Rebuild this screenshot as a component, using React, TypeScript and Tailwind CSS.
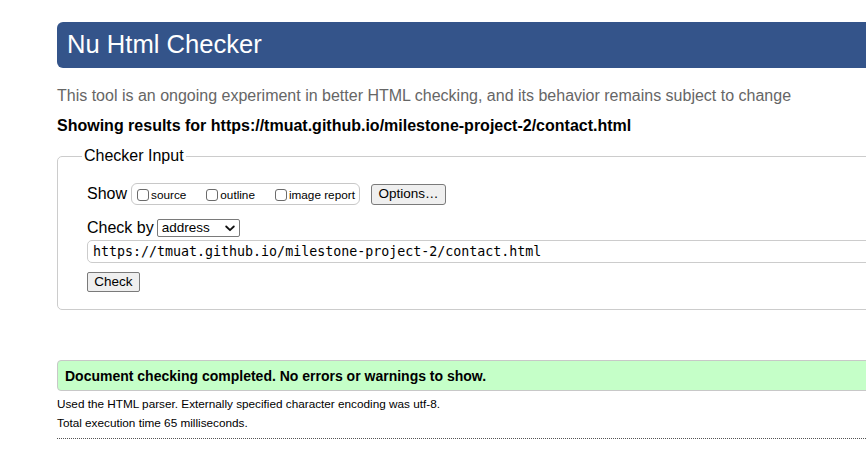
export default function App() {
  const options = [
    { label: "source", gap: "mr-[20px]" },
    { label: "outline", gap: "mr-[20px]" },
    { label: "image report", gap: "" },
  ];

  return (
    <div className="w-[866px] h-[468px] overflow-hidden bg-white pt-[22px] pl-[57px] font-['Liberation_Sans',Arial,sans-serif] text-black">
      <div className="w-[900px]">
        {/* Title bar */}
        <div className="h-[46px] bg-[#34548a] rounded-l-[6px] pl-[10px] flex items-center text-white text-[25.6px] leading-none">
          Nu Html Checker
        </div>

        <p className="mt-[19px] text-[16px] leading-[18px] text-[#666]">
          This tool is an ongoing experiment in better HTML checking, and its behavior remains subject to change
        </p>
        <p className="mt-[12px] text-[16px] leading-[18px] font-bold">
          Showing results for https://tmuat.github.io/milestone-project-2/contact.html
        </p>

        {/* Checker input */}
        <fieldset className="mt-[12px] border border-[#ccc] rounded-l-[5px] pl-[29px] pb-[17px]">
          <legend className="ml-[-5px] px-[2px] text-[16px] leading-[18px]">Checker Input</legend>

          <div className="mt-[18px] flex items-center h-[22px]">
            <span className="text-[16px] leading-[18px]">Show</span>
            <div className="ml-[4px] h-[22px] w-[229px] border border-[#c8c8c8] rounded-[6px] flex items-center pl-[5px] pt-[1px]">
              {options.map((o) => (
                <label key={o.label} className={`flex items-center ${o.gap}`}>
                  <span className="w-[12px] h-[12px] border border-[#6b6b6b] rounded-[3px] bg-white" />
                  <span className="ml-[2px] text-[11.75px] leading-none">{o.label}</span>
                </label>
              ))}
            </div>
            <button className="ml-[11px] h-[21px] w-[75px] border border-[#7a7a7a] rounded-[3px] bg-[#efefef] text-[13.5px] leading-none flex items-center justify-center">
              Options…
            </button>
          </div>

          <div className="mt-[14px] flex items-center h-[18px]">
            <span className="text-[16px] leading-[18px]">Check by</span>
            <div className="ml-[3px] h-[18px] w-[83px] border border-[#7a7a7a] rounded-[2px] bg-white flex items-center justify-between pl-[4px] pr-[4px]">
              <span className="text-[13.5px] leading-none">address</span>
              <svg width="10" height="7" viewBox="0 0 10 7" fill="none" stroke="#111" strokeWidth="1.8" strokeLinecap="round" strokeLinejoin="round">
                <path d="M1.2 1.5 5 5.2 8.8 1.5" />
              </svg>
            </div>
          </div>

          <div className="mt-[3px] h-[23px] border border-[#ccc] rounded-l-[5px] flex items-center pl-[5px] font-['DejaVu_Sans_Mono',monospace] text-[13.3px] leading-none">
            https://tmuat.github.io/milestone-project-2/contact.html
          </div>

          <button className="mt-[9px] h-[20px] w-[53px] border border-[#7a7a7a] rounded-[2px] bg-[#efefef] text-[13.5px] leading-none flex items-center justify-center">
            Check
          </button>
        </fieldset>

        {/* Result */}
        <div className="mt-[50px] h-[31px] bg-[#c5ffc8] border border-[#c8c8c8] rounded-l-[4px] flex items-center pl-[7px] text-[14px] font-bold leading-none">
          Document checking completed. No errors or warnings to show.
        </div>

        <p className="mt-[3px] text-[11.75px] leading-[19px]">
          Used the HTML parser. Externally specified character encoding was utf-8.
        </p>
        <p className="text-[11.75px] leading-[19px]">Total execution time 65 milliseconds.</p>
        <div className="mt-[6px] w-[809px] border-b border-dotted border-[#555]" />
      </div>
    </div>
  );
}
